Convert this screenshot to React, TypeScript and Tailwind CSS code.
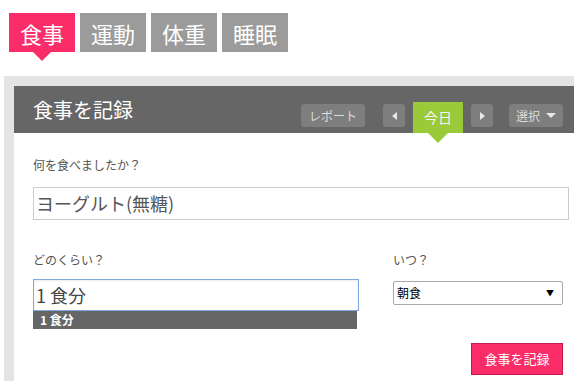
import React from "react";

const font = { fontFamily: '"Noto Sans CJK JP", "Liberation Sans", sans-serif' };

function Tab({ label, active }: { label: string; active?: boolean }) {
  return (
    <div
      className={
        "relative flex h-[39px] w-[66px] items-center justify-center text-[22px] leading-none text-white " +
        (active ? "bg-[#fb2d69]" : "bg-[#9b9b9b]")
      }
    >
      {label}
      {active && (
        <div className="absolute left-1/2 top-full -translate-x-1/2 border-x-[9px] border-t-[9px] border-x-transparent border-t-[#fb2d69]" />
      )}
    </div>
  );
}

export default function App() {
  return (
    <div className="relative h-[381px] w-[574px] overflow-hidden bg-white" style={font}>
      <div className="flex gap-[5px] pl-[9px] pt-[13px]">
        <Tab label="食事" active />
        <Tab label="運動" />
        <Tab label="体重" />
        <Tab label="睡眠" />
      </div>

      <div className="ml-[4px] mt-[24px] h-[305px] bg-[#e4e4e4] pl-[10px] pt-[10px]">
        <div className="h-full bg-white">
          {/* header */}
          <div className="flex h-[47px] items-center bg-[#666666] pl-[19px] pr-[11px]">
            <div className="text-[20px] leading-none text-white">食事を記録</div>
            <div className="ml-auto flex h-full items-end">
              <div className="mb-[6px] flex h-[23px] w-[64px] items-center justify-center rounded-[3px] bg-[#7e7e7e] text-[12px] text-[#dcdcdc]">
                レポート
              </div>
              <div className="mb-[6px] ml-[18px] flex h-[23px] w-[22px] items-center justify-center rounded-[3px] bg-[#7e7e7e]">
                <div className="border-y-[4px] border-r-[5px] border-y-transparent border-r-[#e8e8e8]" />
              </div>
              <div className="relative ml-[8px] flex h-[31px] w-[50px] items-center justify-center bg-[#9ac93a] text-[14px] text-[#f4f4f4]">
                今日
                <div className="absolute left-1/2 top-full -translate-x-1/2 border-x-[10px] border-t-[10px] border-x-transparent border-t-[#9ac93a]" />
              </div>
              <div className="mb-[6px] ml-[8px] flex h-[23px] w-[22px] items-center justify-center rounded-[3px] bg-[#7e7e7e]">
                <div className="border-y-[4px] border-l-[5px] border-y-transparent border-l-[#e8e8e8]" />
              </div>
              <div className="mb-[6px] ml-[16px] flex h-[23px] w-[54px] items-center justify-center gap-[6px] rounded-[3px] bg-[#7e7e7e] text-[12px] text-[#dcdcdc]">
                <span>選択</span>
                <div className="border-x-[5px] border-t-[5px] border-x-transparent border-t-[#e8e8e8]" />
              </div>
            </div>
          </div>

          {/* body */}
          <div className="pl-[19px] pr-[5px] pt-[24px]">
            <div className="text-[12px] leading-[16px] text-[#555]">何を食べましたか？</div>
            <div className="mt-[14px] flex h-[33px] items-center border border-[#cccccc] pl-[2px] text-[18px] text-[#555]">
              ヨーグルト(無糖)
            </div>

            <div className="mt-[32px] flex">
              <div className="relative w-[326px]">
                <div className="text-[12px] leading-[16px] text-[#555]">どのくらい？</div>
                <div className="mt-[11px] flex h-[32px] items-center border border-[#7fa8de] pl-[2px] text-[18px] text-[#444] shadow-[inset_0_1px_2px_rgba(0,0,0,0.08)]">
                  1 食分
                </div>
                <div className="absolute left-0 top-full flex h-[18px] w-[324px] items-center bg-[#666666] pl-[7px] text-[12px] font-bold text-white">
                  1 食分
                </div>
              </div>
              <div className="ml-[34px] w-[170px]">
                <div className="text-[12px] leading-[16px] text-[#555]">いつ？</div>
                <div className="mt-[13px] flex h-[24px] items-center rounded-[2px] border border-[#a9a9a9] pl-[3px] pr-[8px] text-[12px] text-black">
                  <span>朝食</span>
                  <span className="ml-auto text-[8px]">▼</span>
                </div>
              </div>
            </div>

            <div className="mt-[32px] flex justify-end pr-[6px]">
              <div className="flex h-[32px] w-[92px] items-center justify-center border border-[#c41a4e] bg-[#fb2d69] text-[13px] text-white">
                食事を記録
              </div>
            </div>
          </div>
        </div>
      </div>
    </div>
  );
}
